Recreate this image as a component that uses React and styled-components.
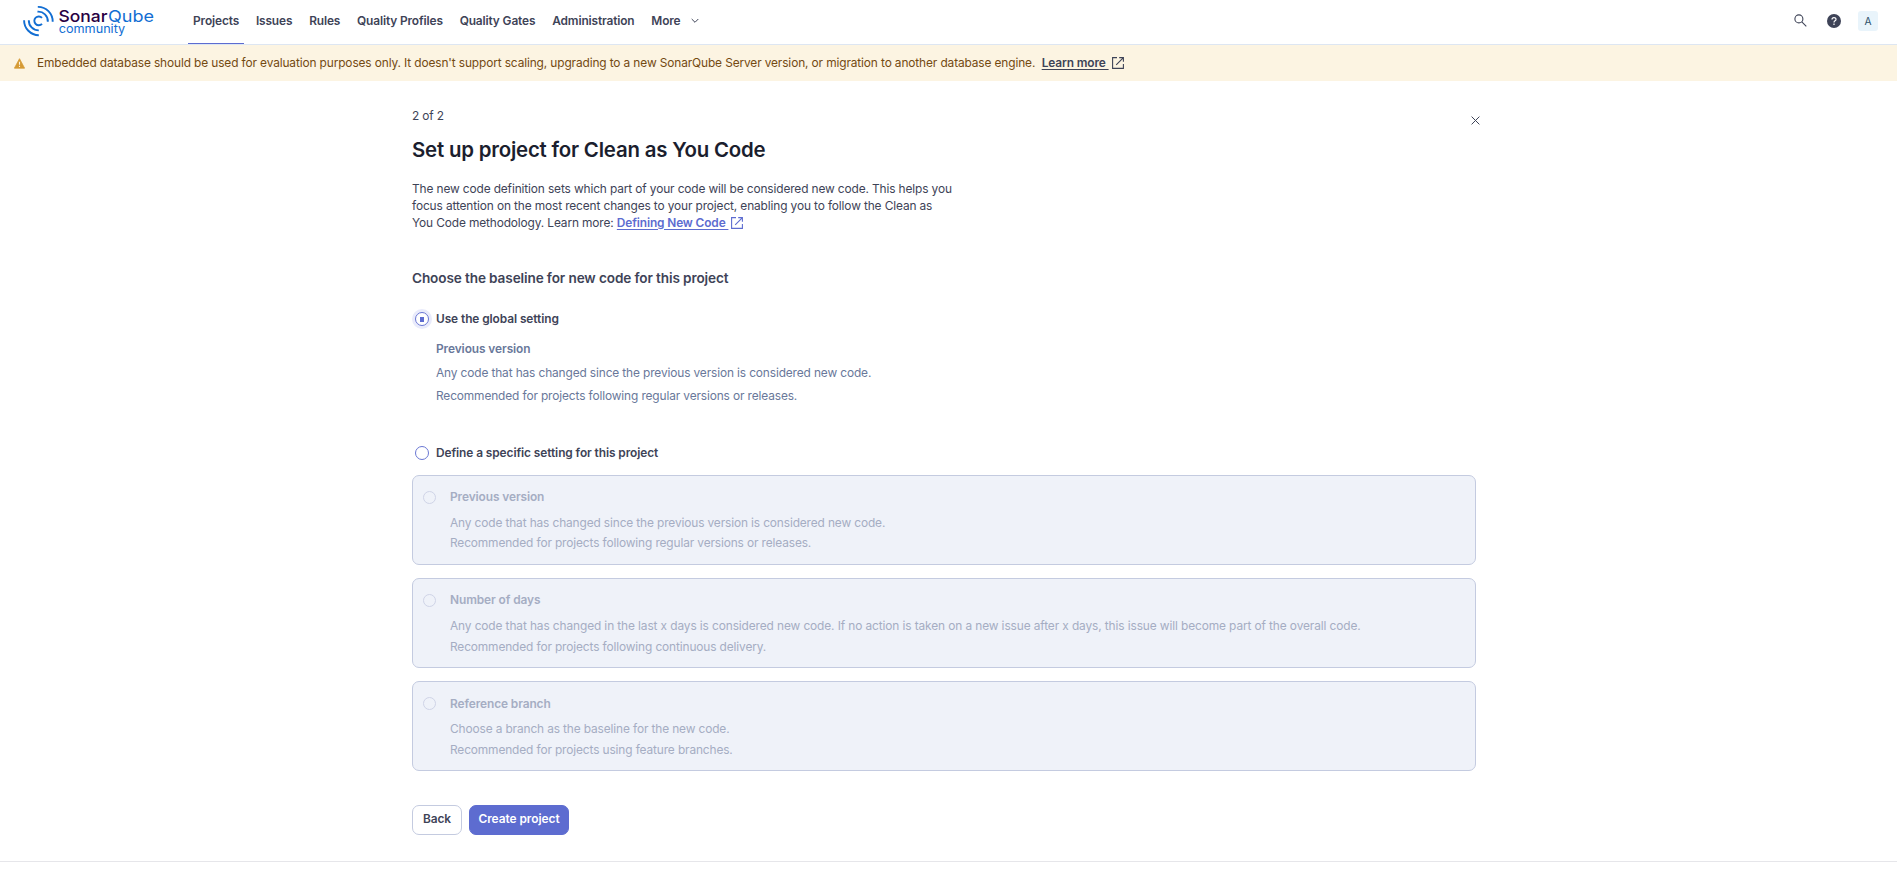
import React from "react";
import styled, { createGlobalStyle } from "styled-components";

const Global = createGlobalStyle`
  * { box-sizing: border-box; }
  body { margin: 0; background: #fff; color: #3e4357; font: 400 11.9px/17px Inter, sans-serif; letter-spacing: -0.125px; }
  p, h1, h2 { margin: 0; }
`;

const Page = styled.div`
  min-height: 870px;
  display: flex;
  flex-direction: column;
`;
const Header = styled.header`
  height: 45px;
  flex: none;
  display: flex;
  align-items: stretch;
  justify-content: space-between;
  border-bottom: 1px solid #dde6f2;
  padding: 0 19px 0 23px;
`;
const Left = styled.div`
  display: flex;
`;
const Logo = styled.svg`
  width: 134px;
  height: 40px;
  margin-right: 31px;
  letter-spacing: 0;
`;
const Nav = styled.nav`
  display: flex;
  gap: 6.8px;
`;
const NavItem = styled.a`
  display: flex;
  align-items: center;
  height: 44px;
  padding: 0 5px ${(p) => (p.$active ? "2px" : "3px")};
  font-weight: 600;
  font-size: 11.9px;
  white-space: nowrap;
  border-bottom: ${(p) => (p.$active ? "1px solid #5d6cd0" : "0")};
  svg { margin-left: 10px; }
`;
const Tools = styled.div`
  display: flex;
  align-items: center;
  padding-bottom: 2px;
`;
const SearchIcon = styled.svg`
  width: 13px;
  height: 13px;
  margin: 0 20px 2px 0;
`;
const HelpIcon = styled.svg`
  width: 14px;
  height: 14px;
  margin-bottom: 1px;
`;
const Avatar = styled.div`
  width: 20px;
  height: 20px;
  border-radius: 3px;
  background: #e9f4fb;
  color: #2a4e68;
  font-size: 10.2px;
  line-height: 21px;
  text-align: center;
  margin-left: 17px;
`;
const Banner = styled.div`
  height: 36px;
  flex: none;
  display: flex;
  align-items: center;
  background: #fcf4e2;
  color: #744a12;
  padding: 0 14px;
  svg { flex: none; }
`;
const BannerText = styled.span`
  margin-left: 12px;
  padding-bottom: 2px;
  white-space: nowrap;
  letter-spacing: -0.12px;
`;
const Link = styled.a`
  font-weight: 600;
  color: ${(p) => p.$color};
  text-decoration: underline;
  text-underline-offset: 2px;
  white-space: pre;
`;
const Main = styled.main`
  width: 1064px;
  margin-left: 412px;
  padding-top: 26px;
  flex: 1;
`;
const StepRow = styled.div`
  display: flex;
  justify-content: space-between;
  height: 31px;
  svg { margin: 9px -4px 0 0; }
`;
const Title = styled.h1`
  font-size: 20.4px;
  line-height: 24px;
  font-weight: 600;
  letter-spacing: -0.19px;
  color: #1b1e2e;
`;
const Intro = styled.div`
  margin-top: 18px;
  white-space: nowrap;
`;
const Subtitle = styled.h2`
  margin-top: 39px;
  font-size: 13.6px;
  line-height: 17px;
  font-weight: 600;
  letter-spacing: -0.12px;
`;
const RadioRow = styled.label`
  display: flex;
  align-items: center;
  height: 20px;
  font-weight: 600;
  letter-spacing: -0.08px;
  gap: 7px;
  padding-left: 3px;
  margin-top: ${(p) => p.$top}px;
`;
const RadioLabel = styled.span`
  padding-bottom: 2px;
`;
const Radio = styled.span`
  display: flex;
  align-items: center;
  justify-content: center;
  flex: none;
  width: ${(p) => (p.$disabled ? 13 : 14)}px;
  height: ${(p) => (p.$disabled ? 13 : 14)}px;
  border-radius: 50%;
  border: 1px solid ${(p) => (p.$disabled ? "#cfd4e7" : "#6a77d3")};
  background: ${(p) => (p.$disabled ? "transparent" : "#fff")};
  box-shadow: ${(p) => (p.$checked ? "0 0 0 3px #e9ebfb" : "none")};
`;
const Dot = styled.span`
  width: 4px;
  height: 5px;
  background: #5d6cd0;
`;
const Detail = styled.div`
  padding: 11px 0 0 24px;
  color: #69789a;
`;
const DetailTitle = styled.p`
  font-weight: 600;
  letter-spacing: -0.08px;
  margin-bottom: 4px;
`;
const DetailLine = styled.p`
  line-height: 23px;
  height: 23px;
`;
const Cards = styled.div`
  display: flex;
  flex-direction: column;
  gap: 13px;
  margin-top: 12px;
`;
const Card = styled.div`
  height: 90px;
  display: flex;
  gap: 14px;
  padding: 12px 10px;
  border: 1px solid #c4cbe0;
  border-radius: 7px;
  background: #eff2f9;
  color: #a5adc3;
  > span { margin-top: 3px; }
`;
const CardTitle = styled.p`
  font-weight: 600;
  letter-spacing: -0.09px;
  height: 25px;
  padding-top: ${(p) => p.$shift}px;
`;
const CardLine = styled.p`
  line-height: ${(p) => p.$leading}px;
  letter-spacing: ${(p) => (p.$long ? -0.105 : -0.125)}px;
`;
const Actions = styled.div`
  display: flex;
  gap: 7px;
  margin-top: 34px;
`;
const Button = styled.button`
  height: 30px;
  width: ${(p) => p.$width}px;
  padding: 0 0 3px;
  border-radius: 7px;
  font: 600 11.9px/17px Inter, sans-serif;
  letter-spacing: -0.04px;
  white-space: nowrap;
  color: ${(p) => (p.$primary ? "#fff" : "#3e4357")};
  background: ${(p) => (p.$primary ? "#5d6cd0" : "#fff")};
  border: 1px solid ${(p) => (p.$primary ? "#5d6cd0" : "#c4cbe0")};
`;
const Footer = styled.footer`
  height: 9px;
  border-top: 1px solid #e6e6ea;
`;

const External = styled.svg`
  width: 12px;
  height: 12px;
  margin-left: 3px;
  vertical-align: -2px;
`;
const ExternalIcon = ({ color }) => (
  <External viewBox="0 0 12 12" fill="none" stroke={color} strokeWidth="1.1">
    <path d="M5 .6H.6v10.8h10.8V7M7.2.6h4.2v4.2M11.2.8 4.2 7.8" />
  </External>
);

const options = [
  { title: "Previous version", lines: ["Any code that has changed since the previous version is considered new code.", "Recommended for projects following regular versions or releases."], leading: 20 },
  { title: "Number of days", lines: ["Any code that has changed in the last x days is considered new code. If no action is taken on a new issue after x days, this issue will become part of the overall code.", "Recommended for projects following continuous delivery."], leading: 20.5 },
  { title: "Reference branch", lines: ["Choose a branch as the baseline for the new code.", "Recommended for projects using feature branches."], leading: 20.5, shift: 1 },
];

export default function App() {
  return (
    <Page>
      <Global />
      <Header>
        <Left>
          <Logo viewBox="23 0 134 40">
            <g fill="none" stroke="#126ed3" strokeWidth="1.9">
              <path d="M42 17.9A4.4 4.4 0 1 0 42 23.8" />
              <path d="M37.5 11.7A9.5 9.5 0 0 1 47.8 21.8" />
              <path d="M37.8 6.9A14.6 14.6 0 0 1 52.7 21.8" />
              <path d="M28.8 20.2A9.9 9.9 0 0 0 38.8 30.4" />
              <path d="M24.1 20.2A14.8 14.8 0 0 0 38.8 35.2" />
            </g>
            <g fontFamily="Inter, sans-serif">
              <text x="58.5" y="21.8" fontSize="16.3" fontWeight="500" fill="#290042" textLength="49" lengthAdjust="spacingAndGlyphs">Sonar</text>
              <text x="108" y="21.8" fontSize="16.3" fontWeight="400" fill="#126ed3" textLength="46" lengthAdjust="spacingAndGlyphs">Qube</text>
              <text x="58.7" y="33.3" fontSize="12.3" fill="#126ed3" textLength="66.5" lengthAdjust="spacingAndGlyphs">community</text>
            </g>
          </Logo>
          <Nav>
            <NavItem $active>Projects</NavItem>
            <NavItem>Issues</NavItem>
            <NavItem>Rules</NavItem>
            <NavItem>Quality Profiles</NavItem>
            <NavItem>Quality Gates</NavItem>
            <NavItem>Administration</NavItem>
            <NavItem>
              More
              <svg width="8" height="6" viewBox="0 0 8 6" fill="none" stroke="#3e4357"><path d="M.7 1 4 4.3 7.3 1" /></svg>
            </NavItem>
          </Nav>
        </Left>
        <Tools>
          <SearchIcon viewBox="0 0 13 13" fill="none" stroke="#3e4357" strokeWidth="1.1"><circle cx="4.9" cy="4.9" r="4" /><path d="m7.8 7.8 4.5 4.5" /></SearchIcon>
          <HelpIcon viewBox="0 0 14 14">
            <circle cx="7" cy="7" r="7" fill="#3e4357" />
            <path d="M5 5.5C5 3 9 3 9 5.4 9 6.9 7 6.8 7 8.4M7 9.6v1.3" fill="none" stroke="#fff" strokeWidth="1.2" />
          </HelpIcon>
          <Avatar>A</Avatar>
        </Tools>
      </Header>
      <Banner>
        <svg width="11" height="11" viewBox="0 0 11 11"><path d="M5.5.7 10.6 10.2H.4Z" fill="#d59a35" stroke="#d59a35" strokeLinejoin="round" strokeWidth=".8" /><path d="M5.5 3.8v3M5.5 7.8V9" stroke="#fcf4e1" strokeWidth="1.1" /></svg>
        <BannerText>
          Embedded database should be used for evaluation purposes only. It doesn't support scaling, upgrading to a new SonarQube Server version, or migration to another database engine.&nbsp;{" "}
          <Link $color="#3e4357">{"Learn more "}</Link>
          <ExternalIcon color="#3e4357" />
        </BannerText>
      </Banner>
      <Main>
        <StepRow>
          <span>2 of 2</span>
          <svg width="9" height="9" viewBox="0 0 9 9" stroke="#3e4357"><path d="m.6.6 7.8 7.8M8.4.6.6 8.4" /></svg>
        </StepRow>
        <Title>Set up project for Clean as You Code</Title>
        <Intro>
          <p>The new code definition sets which part of your code will be considered new code. This helps you</p>
          <p>focus attention on the most recent changes to your project, enabling you to follow the Clean as</p>
          <p>
            {"You Code methodology. Learn more: "}
            <Link $color="#5d6cd0">{"Defining New Code "}</Link>
            <ExternalIcon color="#5d6cd0" />
          </p>
        </Intro>
        <Subtitle>Choose the baseline for new code for this project</Subtitle>
        <RadioRow $top={22}><Radio $checked><Dot /></Radio><RadioLabel>Use the global setting</RadioLabel></RadioRow>
        <Detail>
          <DetailTitle>{options[0].title}</DetailTitle>
          {options[0].lines.map((line) => <DetailLine key={line}>{line}</DetailLine>)}
        </Detail>
        <RadioRow $top={36}><Radio /><RadioLabel>Define a specific setting for this project</RadioLabel></RadioRow>
        <Cards>
          {options.map(({ title, lines, leading, shift = 0 }) => (
            <Card key={title}>
              <Radio $disabled />
              <div>
                <CardTitle $shift={shift}>{title}</CardTitle>
                {lines.map((line) => (
                  <CardLine key={line} $leading={leading} $long={line.length > 100}>{line}</CardLine>
                ))}
              </div>
            </Card>
          ))}
        </Cards>
        <Actions>
          <Button $width={50}>Back</Button>
          <Button $width={100} $primary>Create project</Button>
        </Actions>
      </Main>
      <Footer />
    </Page>
  );
}
